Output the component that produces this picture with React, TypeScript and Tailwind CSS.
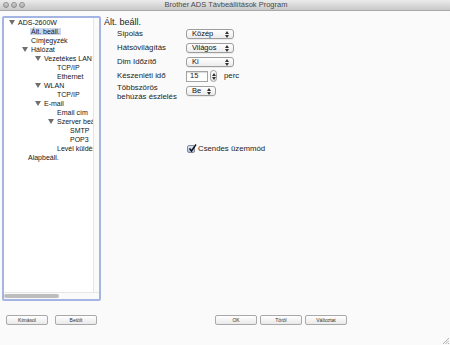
import React from 'react';

interface Node {
  label: string;
  level: number;
  arrow?: boolean;
  selected?: boolean;
  pad?: number;
}

const tree: Node[] = [
  { label: 'ADS-2600W', level: 0, arrow: true },
  { label: 'Ált. beáll.', level: 1, selected: true },
  { label: 'Címjegyzék', level: 1 },
  { label: 'Hálózat', level: 1, arrow: true },
  { label: 'Vezetékes LAN', level: 2, arrow: true },
  { label: 'TCP/IP', level: 3 },
  { label: 'Ethernet', level: 3 },
  { label: 'WLAN', level: 2, arrow: true },
  { label: 'TCP/IP', level: 3 },
  { label: 'E-mail', level: 2, arrow: true },
  { label: 'Email cím', level: 3 },
  { label: 'Szerver beál', level: 3, arrow: true },
  { label: 'SMTP', level: 4 },
  { label: 'POP3', level: 4 },
  { label: 'Levél küldés', level: 3 },
  { label: 'Alapbeáll.', level: 1, pad: 15 },
];

const Arrow = () => (
  <svg width="6" height="5" viewBox="0 0 6 5">
    <polygon points="0,0 6,0 3,5" fill="#6f6f6f" />
  </svg>
);

const UpDown = () => (
  <svg width="4" height="7" viewBox="0 0 4 7">
    <polygon points="0,3 4,3 2,0" fill="#333" />
    <polygon points="0,4 4,4 2,7" fill="#333" />
  </svg>
);

const Popup = ({ value, width }: { value: string; width: string }) => (
  <div
    className={`${width} h-[10px] flex items-center justify-between pl-[5px] pr-[4px] rounded-[3px] border border-[#9d9d9d] bg-gradient-to-b from-white to-[#ececec] text-[7.5px] leading-none text-[#111] shadow-[0_1px_0_rgba(0,0,0,0.06)]`}
  >
    <span>{value}</span>
    <UpDown />
  </div>
);

const Button = ({ label }: { label: string }) => (
  <div className="w-[42px] h-[10px] flex items-center justify-center rounded-[2px] border border-[#a9a9a9] bg-gradient-to-b from-white to-[#e9e9e9] text-[5px] leading-none text-[#333]">
    {label}
  </div>
);

const App: React.FC = () => {
  return (
    <div
      className="relative w-[450px] h-[345px] bg-[#f9faf9] flex flex-col overflow-hidden"
      style={{ fontFamily: '"Liberation Sans", Arial, sans-serif' }}
    >
      {/* title bar */}
      <div className="h-[11px] shrink-0 flex items-center border-b border-[#a8a8a8] bg-gradient-to-b from-[#ebebeb] to-[#c9c9c9] relative">
        <div className="flex gap-[2px] pl-[3px]">
          <span className="w-[6px] h-[6px] rounded-full bg-gradient-to-b from-[#d6d6d6] to-[#a9a9a9] border border-[#8f8f8f]" />
          <span className="w-[6px] h-[6px] rounded-full bg-gradient-to-b from-[#d6d6d6] to-[#a9a9a9] border border-[#8f8f8f]" />
          <span className="w-[6px] h-[6px] rounded-full bg-gradient-to-b from-[#d6d6d6] to-[#a9a9a9] border border-[#8f8f8f]" />
        </div>
        <div className="flex-1 text-center pr-[23px] text-[7.5px] leading-none text-[#4a4a4a]">
          Brother ADS Távbeállítások Program
        </div>
      </div>

      {/* body */}
      <div className="flex items-start mt-[5px]">
        <div className="ml-[2px] w-[99px] h-[285px] border-2 border-[#a4b5e3] rounded-[2px] bg-white flex flex-col">
          <div className="flex flex-1 min-h-0">
            <div className="w-[89px] overflow-hidden">
              {tree.map((n, i) => (
                <div
                  key={i}
                  className="h-[9px] flex items-center whitespace-nowrap text-[7px] leading-none text-[#151515]"
                  style={{ paddingLeft: n.pad ?? 5 + 13 * n.level }}
                >
                  <span className="w-[9px] shrink-0 flex items-center">{n.arrow && <Arrow />}</span>
                  <span className={n.selected ? 'bg-[#c9d6ef] px-[1px] -ml-[1px]' : ''}>{n.label}</span>
                </div>
              ))}
            </div>
            <div className="flex-1 border-l border-[#e6e6e6] bg-[#fafafa]" />
          </div>
          <div className="h-[7px] border-t border-[#e6e6e6] bg-[#fafafa] flex items-center">
            <div className="w-[55px] h-[4px] rounded-full bg-[#bdbdbd]" />
          </div>
        </div>

        <div className="flex-1 pl-[3px] pt-[1px] text-[#1c1c1c]">
          <div className="h-[10px] flex items-center text-[9px] leading-none">Ált. beáll.</div>
          <div className="pl-[13px] text-[7.8px] leading-none">
            <div className="h-[14px] flex items-center">
              <span className="w-[69px]">Sípolás</span>
              <Popup value="Közép" width="w-[48px]" />
            </div>
            <div className="h-[14px] flex items-center">
              <span className="w-[69px]">Hátsóvilágítás</span>
              <Popup value="Világos" width="w-[48px]" />
            </div>
            <div className="h-[14px] flex items-center">
              <span className="w-[69px]">Dim Időzítő</span>
              <Popup value="Ki" width="w-[48px]" />
            </div>
            <div className="h-[14px] flex items-center">
              <span className="w-[69px]">Készenléti idő</span>
              <div className="w-[22px] h-[11px] flex items-center pl-[3px] bg-white border border-[#a3a3a3] shadow-[inset_0_1px_1px_rgba(0,0,0,0.15)] text-[7.5px]">
                15
              </div>
              <div className="ml-[2px] w-[7px] h-[12px] rounded-full border border-[#a0a0a0] bg-gradient-to-b from-white to-[#e6e6e6] flex items-center justify-center">
                <UpDown />
              </div>
              <span className="ml-[7px]">perc</span>
            </div>
            <div className="flex items-start">
              <span className="w-[69px] leading-[9px]">
                Többszörös
                <br />
                behúzás észlelés
              </span>
              <div className="mt-[3px]">
                <Popup value="Be" width="w-[30px]" />
              </div>
            </div>
            <div className="mt-[43px] h-[9px] flex items-center pl-[70px]">
              <div className="relative w-[8px] h-[8px] rounded-[2px] border border-[#7f8aa0] bg-gradient-to-b from-[#dfe7f6] to-[#a9bde3]">
                <svg className="absolute -top-[2px] left-[0px]" width="9" height="9" viewBox="0 0 9 9">
                  <path d="M1.5 4.5 L3.5 7 L8 0.5" stroke="#111" strokeWidth="1.4" fill="none" />
                </svg>
              </div>
              <span className="ml-[3px]">Csendes üzemmód</span>
            </div>
          </div>
        </div>
      </div>

      {/* bottom buttons */}
      <div className="flex items-center mt-[14px]">
        <div className="flex gap-[7px] ml-[6px]">
          <Button label="Kimásol" />
          <Button label="Betölt" />
        </div>
        <div className="flex gap-[3px] ml-[118px]">
          <Button label="OK" />
          <Button label="Töröl" />
          <Button label="Változtat" />
        </div>
      </div>

      {/* resize grip */}
      <svg className="absolute right-[1px] bottom-[1px]" width="7" height="7" viewBox="0 0 7 7">
        <path d="M7 1 L1 7 M7 3.5 L3.5 7 M7 6 L6 7" stroke="#9a9a9a" strokeWidth="0.8" />
      </svg>
    </div>
  );
};

export default App;
